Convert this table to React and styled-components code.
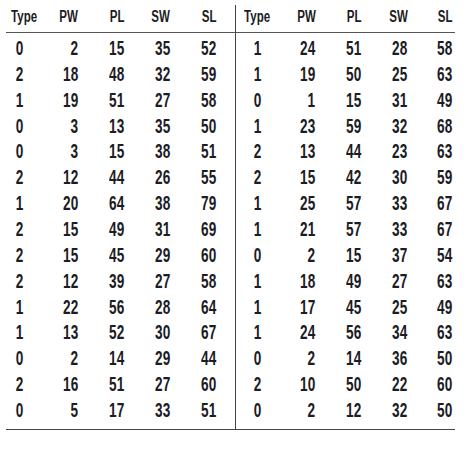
import styled, { createGlobalStyle } from "styled-components";

const Global = createGlobalStyle`
  body {
    margin: 0;
    background: #fff;
    font-family: "Liberation Sans Narrow", "Liberation Sans", sans-serif;
    color: #1c1c24;
  }
`;

const left = [
  [0, 2, 15, 35, 52],
  [2, 18, 48, 32, 59],
  [1, 19, 51, 27, 58],
  [0, 3, 13, 35, 50],
  [0, 3, 15, 38, 51],
  [2, 12, 44, 26, 55],
  [1, 20, 64, 38, 79],
  [2, 15, 49, 31, 69],
  [2, 15, 45, 29, 60],
  [2, 12, 39, 27, 58],
  [1, 22, 56, 28, 64],
  [1, 13, 52, 30, 67],
  [0, 2, 14, 29, 44],
  [2, 16, 51, 27, 60],
  [0, 5, 17, 33, 51],
];

const right = [
  [1, 24, 51, 28, 58],
  [1, 19, 50, 25, 63],
  [0, 1, 15, 31, 49],
  [1, 23, 59, 32, 68],
  [2, 13, 44, 23, 63],
  [2, 15, 42, 30, 59],
  [1, 25, 57, 33, 67],
  [1, 21, 57, 33, 67],
  [0, 2, 15, 37, 54],
  [1, 18, 49, 27, 63],
  [1, 17, 45, 25, 49],
  [1, 24, 56, 34, 63],
  [0, 2, 14, 36, 50],
  [2, 10, 50, 22, 60],
  [0, 2, 12, 32, 50],
];

const heads = ["Type", "PW", "PL", "SW", "SL"];

const Frame = styled.div`
  display: flex;
  width: 449px;
  margin: 5px 0 0 6px;
  border-bottom: 1.5px solid #444;
`;

const Half = styled.div`
  display: flex;
  flex-direction: column;
  width: ${(p) => p.$w}px;
  border-left: ${(p) => (p.$divider ? "1px solid #444" : "none")};
`;

const Head = styled.div`
  display: grid;
  grid-template-columns: ${(p) => p.$cols};
  height: 28px;
  line-height: 24px;
  font-size: 16px;
  font-weight: 700;
  border-bottom: 1.5px solid #555;
  box-sizing: border-box;
  padding-bottom: 4px;
`;

const Body = styled.div`
  padding: 3px 0 5px;
`;

const Row = styled.div`
  display: grid;
  grid-template-columns: ${(p) => p.$cols};
  height: 25.86px;
  line-height: 25.86px;
  font-size: 20px;
  font-weight: 700;
`;

const Cell = styled.div`
  text-align: ${(p) => (p.$num ? "right" : "center")};
  padding-right: ${(p) => (p.$num ? "2px" : "0")};
  span {
    display: inline-block;
    transform: scaleX(${(p) => p.$sx});
    transform-origin: ${(p) => (p.$num ? "right" : "center")} center;
  }
`;

function Section({ rows, cols, w, divider }) {
  return (
    <Half $w={w} $divider={divider}>
      <Head $cols={cols}>
        {heads.map((h, i) => (
          <Cell key={h} $num={i > 0} $sx={0.72}>
            <span>{h}</span>
          </Cell>
        ))}
      </Head>
      <Body>
        {rows.map((r, ri) => (
          <Row key={ri} $cols={cols}>
            {r.map((v, i) => (
              <Cell key={i} $num={i > 0} $sx={0.68}>
                <span>{v}</span>
              </Cell>
            ))}
          </Row>
        ))}
      </Body>
    </Half>
  );
}

export default function App() {
  return (
    <>
      <Global />
      <Frame>
        <Section rows={left} w={230} cols="28px 46px 46px 46px 46px" />
        <Section rows={right} w={219} divider cols="42px 39px 46px 46px 45px" />
      </Frame>
    </>
  );
}
